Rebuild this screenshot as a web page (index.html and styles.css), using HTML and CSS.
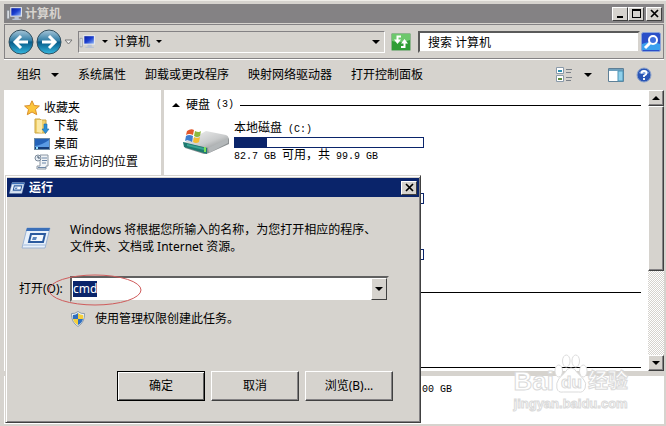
FILE: index.html
```html
<!DOCTYPE html>
<html lang="zh-CN">
<head>
  <meta charset="UTF-8">
  <meta name="viewport" content="width=device-width, initial-scale=1.0">
  <title>计算机</title>
  <link rel="stylesheet" href="styles.css">
</head>
<body>

  <!-- Shared icons -->
  <svg class="defs" width="0" height="0" aria-hidden="true">
    <defs>
      <linearGradient id="g-orb" x1="0" y1="0" x2="0" y2="1">
        <stop offset="0" stop-color="#a9c6d8"/>
        <stop offset="0.45" stop-color="#2f7da6"/>
        <stop offset="0.5" stop-color="#075a88"/>
        <stop offset="1" stop-color="#35b8e0"/>
      </linearGradient>
      <linearGradient id="g-screen" x1="0" y1="0" x2="1" y2="1">
        <stop offset="0" stop-color="#0a1ea0"/>
        <stop offset="0.5" stop-color="#1b3fd0"/>
        <stop offset="1" stop-color="#8fb4f4"/>
      </linearGradient>
      <linearGradient id="g-disk" x1="0" y1="0" x2="1" y2="1">
        <stop offset="0" stop-color="#f4f4f4"/>
        <stop offset="0.6" stop-color="#c9cbcc"/>
        <stop offset="1" stop-color="#84888a"/>
      </linearGradient>
    </defs>
    <symbol id="i-computer" viewBox="0 0 16 14">
      <rect x="4" y="1" width="11" height="9" fill="#e4e8ee"/>
      <rect x="5" y="2" width="9" height="7" fill="url(#g-screen)"/>
      <path d="M8 10h4v2h2v1H6v-1h2z" fill="#b9c3d4"/>
      <path d="M1 4h2v8H1z" fill="#eef1f4" stroke="#7d8796" stroke-width="0.6"/>
    </symbol>
    <symbol id="i-run" viewBox="0 0 30 22">
      <path d="M6 1h23l-5 20H1z" fill="#e8f0fa" stroke="#9db3d2"/>
      <path d="M6 1h23l-1 3H5z" fill="#3b6fb8"/>
      <path d="M10 7h14l-2 8H8z" fill="#f4f8fd" stroke="#2b5a9f" stroke-width="2"/>
      <path d="M12 10h4l-1 3h-4z" fill="#5b86bf"/>
      <path d="M2 18h22" stroke="#c3d4ea" stroke-width="2"/>
    </symbol>
  </svg>

  <!-- Explorer window -->
  <div class="window">
    <header class="titlebar">
      <svg class="icon" width="17" height="15"><use href="#i-computer"/></svg>
      <h1>计算机</h1>
      <div class="window-buttons">
        <button aria-label="最小化"><svg width="9" height="9"><path d="M1 7h6v2H1z"/></svg></button>
        <button aria-label="最大化"><svg width="9" height="9"><path d="M0 0h9v9H0zM1 2v6h7V2z" fill-rule="evenodd"/></svg></button>
        <button class="close" aria-label="关闭"><svg width="9" height="9"><path d="M1 1l7 7M8 1l-7 7" stroke="#000" stroke-width="1.7"/></svg></button>
      </div>
    </header>

    <div class="navbar">
      <div class="orbs">
        <button aria-label="后退"><svg width="26" height="26" viewBox="0 0 26 26"><circle cx="13" cy="13" r="12" fill="url(#g-orb)" stroke="#34505f"/><path d="M20 13H8M13 7l-6 6 6 6" fill="none" stroke="#fff" stroke-width="3"/></svg></button>
        <button aria-label="前进"><svg width="26" height="26" viewBox="0 0 26 26"><circle cx="13" cy="13" r="12" fill="url(#g-orb)" stroke="#34505f"/><path d="M6 13h12M13 7l6 6-6 6" fill="none" stroke="#fff" stroke-width="3"/></svg></button>
        <svg width="9" height="6"><path d="M1 1h7L4.500 5z" fill="#eee" stroke="#777"/></svg>
      </div>
      <div class="address">
        <svg class="icon" width="17" height="15"><use href="#i-computer"/></svg>
        <span class="arrow"></span>
        <a href="#">计算机</a>
        <span class="arrow"></span>
        <button class="address-drop" aria-label="历史"><span class="arrow big"></span></button>
      </div>
      <button class="refresh" aria-label="刷新">
        <svg width="20" height="18" viewBox="0 0 20 18"><rect x="0.500" y="0.500" width="19" height="17" rx="1" fill="#2f9e35" stroke="#8fb58f"/><path d="M1 1h18v6Q10 11 1 8z" fill="#6cc86c"/><path d="M10 3.500H6.500V7M13.500 9v5H10" fill="none" stroke="#fff" stroke-width="2"/><path d="M3 6.500h7L6.500 11zM10 10.500h7L13.500 6z" fill="#fff"/></svg>
      </button>
      <input class="search" type="text" aria-label="搜索" value="搜索 计算机">
      <button class="search-btn" aria-label="搜索">
        <svg width="20" height="20" viewBox="0 0 20 20"><rect x="0.500" y="0.500" width="19" height="19" rx="2" fill="#2a4fc8" stroke="#8aa3d8"/><path d="M1 12Q10 8 19 12v6H1z" fill="#3aa0ee"/><circle cx="12" cy="8" r="4" fill="#3f6fdc" stroke="#fff" stroke-width="2"/><path d="M9 11l-5 5" stroke="#fff" stroke-width="3"/></svg>
      </button>
    </div>

    <div class="toolbar">
      <button>组织 <span class="arrow big"></span></button>
      <button>系统属性</button>
      <button>卸载或更改程序</button>
      <button>映射网络驱动器</button>
      <button>打开控制面板</button>
      <div class="view-tools">
        <button aria-label="更改视图">
          <svg width="16" height="16"><path d="M.5.500h7v6h-7zM.5 8.500h7v6h-7z" fill="#fff" stroke="#8a9aaa"/><path d="M2 3h4v2H2z" fill="#2d8fb0"/><path d="M2 11h4v2H2z" fill="#5c8a3c"/><path d="M10 2.500h6M10 5.500h5M10 10.500h6M10 13.500h5" stroke="#7a8088"/></svg>
          <span class="arrow big"></span>
        </button>
        <button aria-label="预览窗格">
          <svg width="16" height="15"><path d="M.5.500h15v13H.5z" fill="#fff" stroke="#5e7f96"/><path d="M1 1h14v2H1z" fill="#6fa0bd"/><path d="M10 3h5v10h-5z" fill="#8fd0ea" stroke="#4f93b4"/></svg>
        </button>
        <button aria-label="帮助">
          <svg width="16" height="16"><circle cx="8" cy="8" r="7" fill="#2a55b5" stroke="#8ea4cc"/><path d="M2.500 6Q8 0 13.500 6 8 8 2.500 6z" fill="#7fa2e0"/><path d="M5.500 6.500Q5.500 4 8 4t2.500 2.300Q10.500 7.500 8 8.800V10M8 11v2" fill="none" stroke="#fff" stroke-width="1.800"/></svg>
        </button>
      </div>
    </div>

    <div class="content">
      <nav class="sidebar">
        <a class="favorites" href="#">
          <svg width="16" height="16"><path d="M8 .8l2.200 4.700 5.200.5-3.900 3.500 1.200 5.200L8 12l-4.700 2.700 1.200-5.200L.6 6l5.200-.5z" fill="#fcc53c" stroke="#d98e2b"/></svg>
          收藏夹
        </a>
        <a href="#">
          <svg width="16" height="16"><path d="M1 1h5l1 1h5v13H1z" fill="#f0cf6a" stroke="#c9a545"/><path d="M3 2h5v13l-5-1z" fill="#fbe9a6"/><path d="M10 6h3v5h2l-3.500 4.500L8 11h2z" fill="#2b8fd6" stroke="#1c6cab" stroke-width="0.600"/></svg>
          下载
        </a>
        <a href="#">
          <svg width="16" height="14"><rect x="0.500" y="1.500" width="15" height="11" fill="#2462b8" stroke="#6d8ba6"/><path d="M1 9Q8 8 15 3v7H1z" fill="#5a9be4"/><path d="M1 10h14v2H1z" fill="#143c78"/><path d="M2 10h2v2H2z" fill="#8fe0ff"/></svg>
          桌面
        </a>
        <a href="#">
          <svg width="16" height="16"><path d="M6 1h8v11h-2v3H3v-3h3z" fill="#f0f3f6" stroke="#8a96a3"/><path d="M8 4h5M8 6.500h5M8 9h4M4 13.500h8" stroke="#6c87a8"/><circle cx="4" cy="4" r="3" fill="#e6edf5" stroke="#7d8b9b"/><path d="M4 2v2h2" fill="none" stroke="#43566b"/></svg>
          最近访问的位置
        </a>
      </nav>

      <main class="files">
        <div class="groups">
          <h2 class="group-title"><span class="arrow up"></span>硬盘 <span class="latin">(3)</span></h2>
          <div class="drives">
            <div class="drive">
              <svg width="48" height="30" viewBox="0 0 48 30">
                <path d="M2 17L24 6l20 4q3 1 3 4v4L27 27q-2 1-5 1L3 22z" fill="#8c9092"/>
                <path d="M2 17L24 5l20 4q3 1 2 4L27 22z" fill="url(#g-disk)"/>
                <path d="M1 16l24 6v6L2 21z" fill="#1e7a70"/>
                <path d="M5 18l17 4v2L5 20z" fill="#3aa493"/>
                <path d="M22 21h2v5h-2z" fill="#7de05a"/>
                <path d="M26 22L46 12v5L27 27z" fill="#b3b7b9"/>
                <path d="M5 5q4-3 7-1l-1 5q-4-2-7 0z" fill="#e2582c"/>
                <path d="M13 5q4 2 6 0l-1 5q-3 2-6 0z" fill="#8cb83c"/>
                <path d="M4 10q3-2 7 0l-1 6q-4-3-7-1z" fill="#3f7fd0"/>
                <path d="M12 11q3 2 6 0l-1 5q-3 2-6 0z" fill="#f4bd30"/>
              </svg>
              <div class="drive-info">
                <p>本地磁盘<span class="latin"> (C:)</span></p>
                <div class="bar"><div class="used" style="width: 17%"></div></div>
                <p class="free"><span class="latin">82.7 GB </span>可用，共<span class="latin"> 99.9 GB</span></p>
              </div>
            </div>
            <div class="drive">
              <div class="drive-info"><p></p><div class="bar"></div></div>
            </div>
            <div class="drive">
              <div class="drive-info"><p></p><div class="bar"></div></div>
            </div>
          </div>
          <div class="group-title"></div>
          <div class="drives">
            <div class="drive"></div>
          </div>
          <div class="group-title"></div>
        </div>
        <div class="scrollbar">
          <button aria-label="向上滚动"><span class="arrow up"></span></button>
          <div class="thumb"></div>
          <div class="track"></div>
          <button aria-label="向下滚动"><span class="arrow big"></span></button>
        </div>
      </main>
    </div>

    <footer class="details"><span class="latin">00 GB</span></footer>
  </div>

  <!-- Run dialog -->
  <form class="dialog">
    <div class="dialog-title">
      <svg width="16" height="12"><use href="#i-run"/></svg>
      <h2>运行</h2>
      <button class="close" type="button" aria-label="关闭"><svg width="9" height="9"><path d="M1 1l7 7M8 1l-7 7" stroke="#000" stroke-width="1.7"/></svg></button>
    </div>
    <div class="dialog-body">
      <div class="intro">
        <svg width="30" height="22"><use href="#i-run"/></svg>
        <p>Windows 将根据您所输入的名称，为您打开相应的程序、<br>文件夹、文档或 Internet 资源。</p>
      </div>
      <div class="open-row">
        <label for="open">打开(O):</label>
        <div class="combo">
          <input type="text" id="open" value="cmd">
          <button type="button" aria-label="展开"><span class="arrow big"></span></button>
        </div>
        <svg class="mark" width="96" height="32" viewBox="0 0 96 32"><ellipse cx="48" cy="16" rx="46" ry="15" fill="none" stroke="#cf5b5b"/></svg>
      </div>
      <div class="admin-row">
        <svg width="14" height="16"><path d="M7 .5Q10 3 13.500 2.500 14 11 7 15.500 0 11 .5 2.500 4 3 7 .5z" fill="#eef3f8" stroke="#8b9bab"/><path d="M7 2v6H2Q1.500 6 2 4q3 0 5-2zM7 8h5q-1 4-5 6z" fill="#2f6fc0"/><path d="M7 2q2 2 5 2 .5 2 0 4H7zM2 8h5v6Q3 12 2 8z" fill="#f4cf3c"/></svg>
        <p>使用管理权限创建此任务。</p>
      </div>
      <div class="dialog-buttons">
        <button class="default" type="submit">确定</button>
        <button type="button">取消</button>
        <button type="button">浏览(B)...</button>
      </div>
    </div>
  </form>

  <!-- Watermark -->
  <div class="watermark">
    <div class="brand">
      <span>Bai</span>
      <div class="paw">
        <svg width="34" height="40" viewBox="0 0 36 40" preserveAspectRatio="none"><g fill="#fff" stroke="#dadada"><ellipse cx="5" cy="17" rx="4" ry="6"/><ellipse cx="13" cy="7" rx="4" ry="6"/><ellipse cx="23" cy="7" rx="4" ry="6"/><ellipse cx="31" cy="17" rx="4" ry="6"/><path d="M18 14q4 0 6 4l7 7q4 4 2 9-2 5-7 4H10q-6 1-7-4-1-5 2-9l7-7q2-4 6-4z"/></g></svg>
        <span>du</span>
      </div>
      <span class="cn">经验</span>
    </div>
    <div class="site">jingyan.baidu.com</div>
  </div>

</body>
</html>
```
FILE: styles.css
```css
* {
  margin: 0;
  padding: 0;
  box-sizing: border-box;
}
body {
  font-family: "Noto Sans", "Noto Sans CJK SC", sans-serif;
  font-size: 12px;
  line-height: 16px;
  color: #000;
  background-color: #d6d3ce;
  height: 100vh;
  overflow: hidden;
  position: relative;
}
button, input {
  font: inherit;
  color: inherit;
  border: none;
  background: none;
}
button {
  display: flex;
  align-items: center;
  justify-content: center;
  white-space: nowrap;
}
svg {
  display: block;
  flex: none;
}
a {
  color: inherit;
  text-decoration: none;
}
h1, h2 {
  font-size: 12px;
  line-height: 16px;
}
.defs {
  position: absolute;
}
.latin {
  font-family: "Liberation Mono", monospace;
  font-size: 10px;
  white-space: pre;
}
.arrow {
  flex: none;
  border: 3px solid transparent;
  border-top-color: #000;
  border-bottom: none;
}
.arrow.big {
  border-width: 4px;
  border-bottom: none;
}
.arrow.up {
  border: 4px solid transparent;
  border-bottom-color: #000;
  border-top: none;
}

/* Explorer window */
.window {
  display: flex;
  flex-direction: column;
  height: 100vh;
  padding: 3px 2px 2px 4px;
  border-top: 1px solid #efede8;
}
.titlebar {
  display: flex;
  align-items: center;
  gap: 2px;
  height: 19px;
  padding: 0 2px;
  background-color: #848284;
  color: #d6d3ce;
}
.window-buttons {
  display: flex;
  margin-left: auto;
}
.window-buttons button, .close {
  width: 16px;
  height: 14px;
  background-color: #d6d3ce;
  border: 1px solid;
  border-color: #fff #404040 #404040 #fff;
}
.window-buttons .close {
  margin-left: 2px;
}
.navbar {
  display: flex;
  align-items: center;
  height: 35px;
  margin: 1px 0;
  padding: 0 1px 0 3px;
  border: 1px solid #848284;
  box-shadow: 0 1px #fff;
}
.orbs {
  display: flex;
  align-items: center;
  gap: 2px;
  width: 70px;
}
.address {
  display: flex;
  flex: 1;
  align-items: center;
  gap: 6px;
  height: 22px;
  border: 1px solid;
  border-color: #848284 #fff #fff #848284;
}
.address-drop {
  margin-left: auto;
  padding: 4px;
}
.refresh {
  width: 24px;
  height: 22px;
  margin: 0 5px 0 4px;
}
.search {
  width: 222px;
  height: 22px;
  padding: 0 8px;
  background-color: #fff;
  border: 2px solid;
  border-color: #5a5a5a #d6d3ce #d6d3ce #5a5a5a;
}
.search-btn {
  margin: 0 1px;
}
.toolbar {
  display: flex;
  align-items: center;
  gap: 19px;
  height: 30px;
  padding: 0 12px 0 13px;
}
.toolbar button {
  gap: 10px;
}
.view-tools {
  display: flex;
  align-items: center;
  gap: 12px;
  margin-left: auto;
}
.view-tools button {
  gap: 12px;
}
.view-tools button:nth-child(2) {
  margin-left: 4px;
}
.content {
  display: flex;
  flex: 1;
  min-height: 0;
}
.sidebar {
  width: 160px;
  padding: 9px 0 0 30px;
  background-color: #fff;
  border-right: 3px solid #d6d3ce;
}
.sidebar a {
  display: flex;
  align-items: center;
  gap: 4px;
  height: 18px;
  white-space: nowrap;
}
.sidebar a.favorites {
  margin-left: -10px;
}
.files {
  display: flex;
  flex: 1;
  min-width: 0;
  background-color: #fff;
}
.groups {
  flex: 1;
  overflow: hidden;
  padding: 0 7px 0 8px;
}
.group-title {
  display: flex;
  align-items: center;
  gap: 6px;
  height: 30px;
  font-weight: normal;
}
.group-title::after {
  content: "";
  flex: 1;
  height: 1px;
  background-color: #000;
}
.drives {
  display: grid;
  gap: 14px;
  margin-bottom: 3px;
}
.drive {
  display: flex;
  align-items: center;
  height: 42px;
  padding-left: 10px;
}
.drive-info {
  width: 190px;
  height: 42px;
  margin-left: auto;
  margin-right: 217px;
}
.drive-info p {
  height: 17px;
}
.drive-info .free {
  height: 14px;
  line-height: 14px;
}
.bar {
  height: 11px;
  border: 1px solid #0a246a;
  background-color: #fff;
}
.used {
  height: 100%;
  background-color: #0a246a;
}
.scrollbar {
  display: flex;
  flex-direction: column;
  width: 16px;
  background: repeating-conic-gradient(#d6d3ce 0% 25%, #fff 0% 50%) 0 0 / 2px 2px;
}
.scrollbar button, .thumb {
  height: 16px;
  background-color: #d6d3ce;
  border: 1px solid;
  border-color: #fff #404040 #404040 #fff;
  box-shadow: inset -1px -1px #848284;
}
.scrollbar .thumb {
  flex: 164;
}
.track {
  flex: 85;
}
.details {
  height: 48px;
  margin-top: 5px;
  padding: 4px 0 0 418px;
  background-color: #fff;
}

/* Run dialog */
.dialog {
  position: absolute;
  left: 5px;
  top: 175px;
  width: 416px;
  padding: 1px;
  background-color: #d6d3ce;
  border: 1px solid;
  border-color: #d6d3ce #404040 #404040 #d6d3ce;
  box-shadow: inset 1px 1px #fff, inset -1px -1px #848284;
}
.dialog-title {
  display: flex;
  align-items: center;
  gap: 4px;
  height: 19px;
  margin-top: 1px;
  padding: 0 2px;
  background-color: #0a246a;
  color: #fff;
}
.dialog-title .close {
  margin-left: auto;
}
.dialog-body {
  padding: 24px 24px 20px 12px;
}
.intro {
  display: flex;
  align-items: center;
  gap: 19px;
  padding-left: 2px;
  line-height: 17px;
  white-space: nowrap;
}
.open-row {
  position: relative;
  display: flex;
  align-items: center;
  margin: 21px 6px 0 0;
}
.open-row label {
  width: 51px;
}
.combo {
  display: flex;
  align-items: center;
  flex: 1;
  height: 26px;
  padding-left: 1px;
  background-color: #fff;
  border: 2px solid;
  border-color: #606060 #d6d3ce #d6d3ce #606060;
}
.combo input {
  field-sizing: content;
  height: 16px;
  background-color: #0a246a;
  color: #fff;
}
.combo button {
  width: 16px;
  height: 22px;
  margin-left: auto;
  background-color: #d6d3ce;
  border: 1px solid;
  border-color: #fff #404040 #404040 #fff;
}
.mark {
  position: absolute;
  left: 28px;
  top: -2px;
}
.admin-row {
  display: flex;
  align-items: center;
  gap: 10px;
  margin: 9px 0 44px 52px;
}
.dialog-buttons {
  display: flex;
  justify-content: flex-end;
  gap: 6px;
  margin-right: 2px;
}
.dialog-buttons button {
  width: 88px;
  height: 30px;
  background-color: #d6d3ce;
  border: 1px solid;
  border-color: #fff #404040 #404040 #fff;
  box-shadow: inset -1px -1px #848284;
}
.dialog-buttons .default {
  border-color: #000;
  box-shadow: inset 1px 1px #fff, inset -1px -1px #606060;
}

/* Watermark */
.watermark {
  position: absolute;
  right: 38px;
  bottom: 14px;
  font-family: "Liberation Sans", "Noto Sans CJK SC", sans-serif;
  font-weight: bold;
  color: #fff;
  -webkit-text-stroke: 1px #dadada;
}
.brand {
  display: flex;
  align-items: flex-end;
  height: 42px;
  padding-bottom: 2px;
  font-size: 26px;
  line-height: 26px;
}
.paw {
  position: relative;
}
.paw span {
  position: absolute;
  left: 7px;
  bottom: 0;
  font-size: 17px;
  line-height: 22px;
}
.brand .cn {
  font-size: 20px;
}
.site {
  font-size: 13px;
  line-height: 16px;
}
```
